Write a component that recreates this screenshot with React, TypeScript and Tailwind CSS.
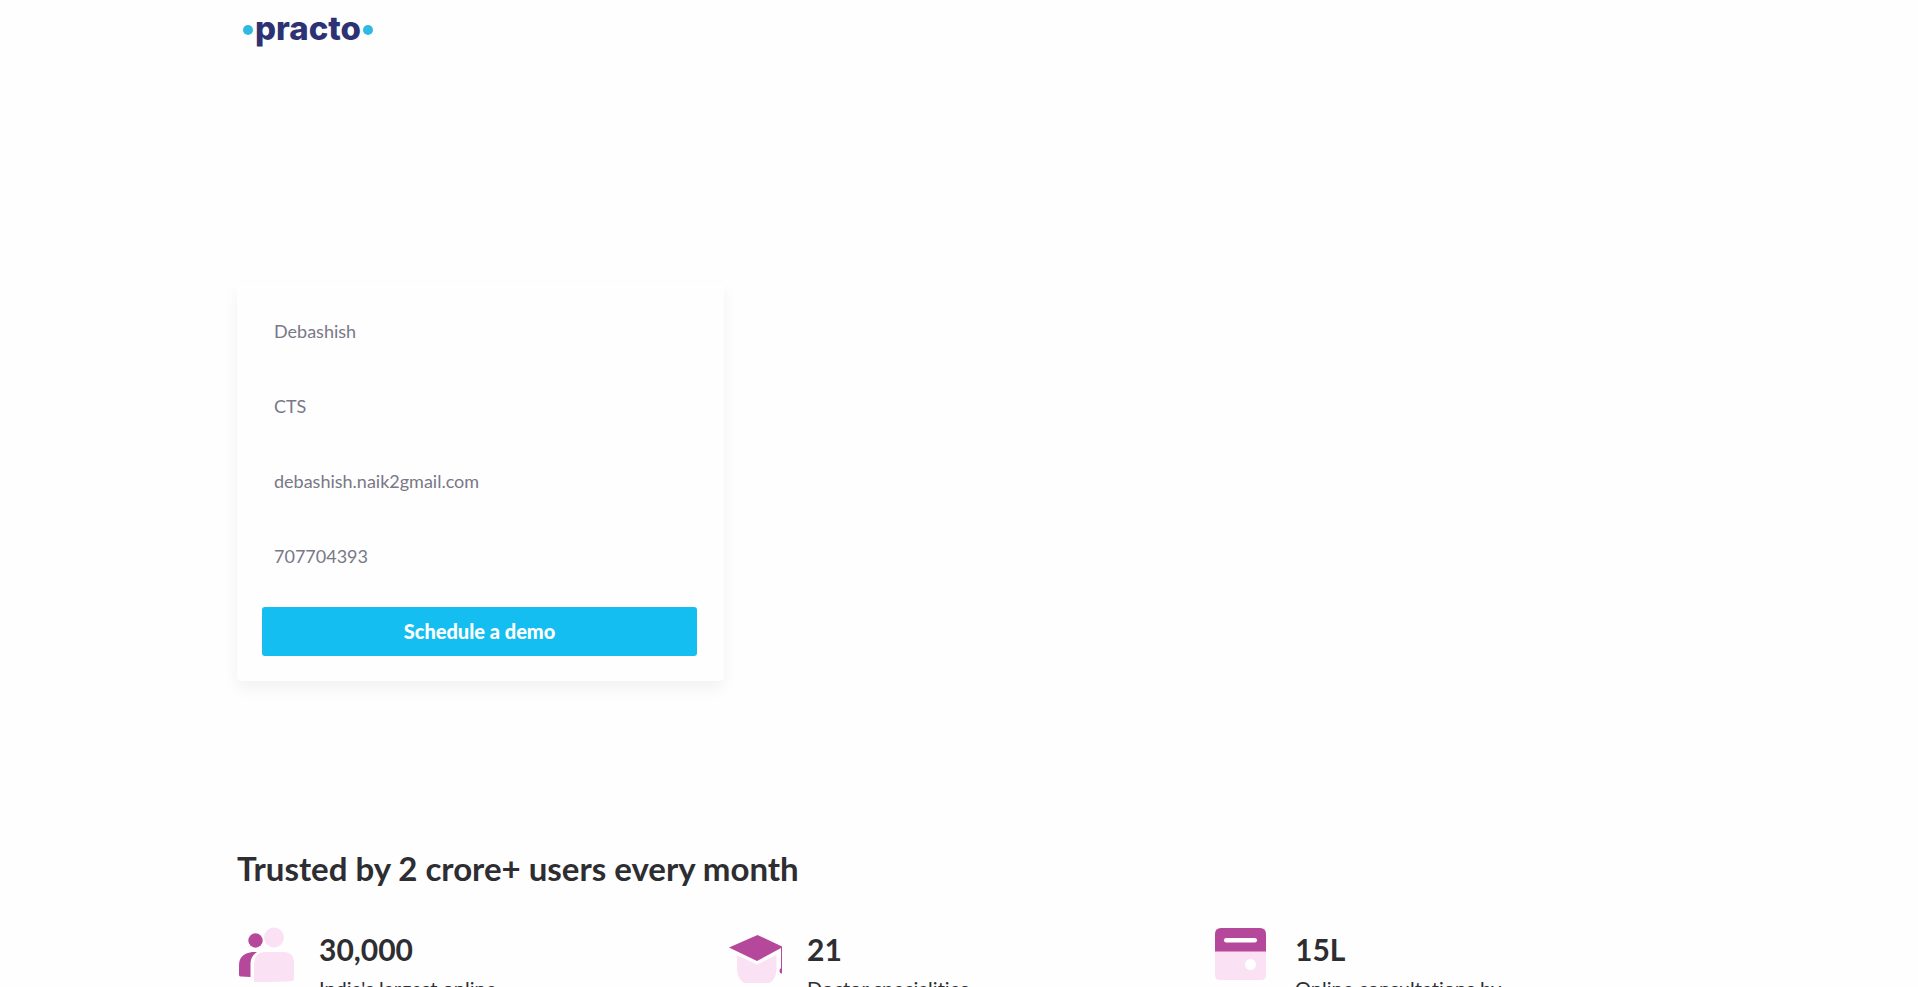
import React from 'react';

const fields = [
  { id: 'name', label: 'Name', type: 'text', value: 'Debashish' },
  { id: 'organization', label: 'Organization', type: 'text', value: 'CTS' },
  { id: 'email', label: 'Email', type: 'text', value: 'debashish.naik2gmail.com' },
  { id: 'phone', label: 'Phone', type: 'tel', value: '707704393' },
];

function Logo() {
  return (
    <a href="#" aria-label="practo" className="flex items-center gap-[2px] text-[#2d3274]">
      <span className="mt-[3px] size-[10px] rounded-full bg-[#2fb9e3]" />
      <span className="font-['Inter'] text-[33px] leading-[50px] font-extrabold">practo</span>
      <span className="mt-[3px] size-[10px] rounded-full bg-[#2fb9e3]" />
    </a>
  );
}

function PeopleIcon() {
  return (
    <svg viewBox="0 0 60 60" className="size-[60px]" aria-hidden="true">
      <circle cx="18.5" cy="18.5" r="7.2" fill="#b5489a" />
      <path d="M20 30H15Q2 32 2 43V53Q2 54.500 4 54.500L13.500 55V42Q13.500 34 20 30Z" fill="#b5489a" />
      <circle cx="37" cy="15.5" r="10" fill="#fae1f4" />
      <path d="M28 30H46Q57 30 57 41V57Q57 59 55 59Q46 60 17 60V43Q17 30 28 30Z" fill="#fae1f4" />
    </svg>
  );
}

function CapIcon() {
  return (
    <svg viewBox="0 0 60 60" className="size-[60px] overflow-visible" aria-hidden="true">
      <path d="M12 33L32 42.500L51.500 33V47Q51.500 56 45 61H19Q12 56 12 47Z" fill="#fae1f4" />
      <path d="M4 25.500L32.500 13L57 24.500V25.500L32 39Z" fill="#b5489a" />
      <path d="M56 25H57V51.500H56.500Q54.500 51 54.500 49Q54.500 47 56 46Z" fill="#b5489a" />
    </svg>
  );
}

function CardIcon() {
  return (
    <svg viewBox="0 0 60 60" className="size-[60px]" aria-hidden="true">
      <path d="M2 29H53V53Q53 58 48 58H7Q2 58 2 53Z" fill="#fae1f4" />
      <path d="M8 6H47Q53 6 53 12V29.500H2V12Q2 6 8 6Z" fill="#b5489a" />
      <rect x="11" y="16" width="33" height="4.500" rx="2.200" fill="#fff" />
      <circle cx="37.500" cy="42.500" r="5.500" fill="#fff" />
    </svg>
  );
}

const stats = [
  { icon: <PeopleIcon />, value: '30,000', text: "India's largest online" },
  { icon: <CapIcon />, value: '21', text: 'Doctor specialities' },
  { icon: <CardIcon />, value: '15L', text: 'Online consultations by' },
];

export default function App() {
  return (
    <div className="h-screen overflow-hidden bg-[#fefefe] px-[237px] font-['Lato',sans-serif] text-[#2d2d32] [font-variant-ligatures:none]">
      <header className="flex h-[56px] items-center pl-[6px]">
        <Logo />
      </header>
      <main>
        <form
          onSubmit={(e) => e.preventDefault()}
          className="mt-[226px] flex w-[487px] flex-col rounded-[5px] pt-[24px] pr-[27px] pb-[25px] pl-[25px] shadow-[0_8px_16px_rgba(0,0,0,0.05)]"
        >
          <div className="flex flex-col gap-[25px] pb-[26px]">
            {fields.map((f) => (
              <input
                key={f.id}
                id={f.id}
                aria-label={f.label}
                type={f.type}
                defaultValue={f.value}
                className="h-[50px] w-full bg-transparent px-[12px] text-[18px] text-[#787887] outline-none"
              />
            ))}
          </div>
          <button type="submit" className="h-[49px] rounded-[3px] bg-[#14bef0] pb-[2px] text-[20px] font-black text-white">
            Schedule a demo
          </button>
        </form>
        <section className="mt-[163px]">
          <h2 className="text-[33px] leading-[48px] font-bold">Trusted by 2 crore+ users every month</h2>
          <ul className="mt-[30px] grid grid-cols-3 gap-[20px]">
            {stats.map((s) => (
              <li key={s.value} className="flex gap-[22px]">
                {s.icon}
                <div className="pt-[7px]">
                  <h3 className="text-[30px] leading-[40px] font-bold">{s.value}</h3>
                  <p className="mt-[7px] text-[20px] leading-[24px]">{s.text}</p>
                </div>
              </li>
            ))}
          </ul>
        </section>
      </main>
    </div>
  );
}
